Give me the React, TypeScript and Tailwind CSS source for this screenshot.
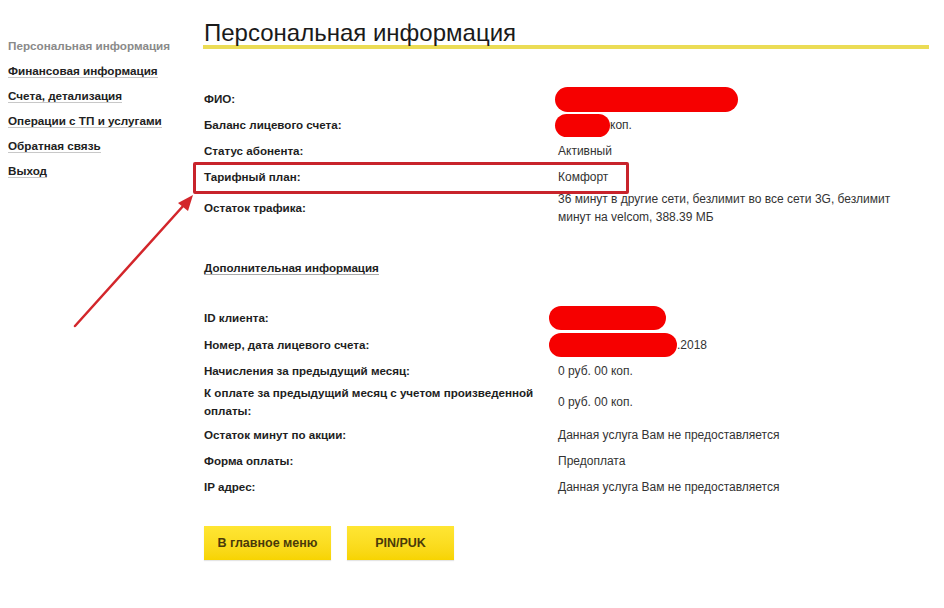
import React from "react";

const font = { fontFamily: '"Liberation Sans", Arial, sans-serif' };

function Blob({ w, h = 24, ml = 0 }: { w: number; h?: number; ml?: number }) {
  return (
    <span
      className="inline-block rounded-full bg-[#f60000] align-middle"
      style={{ width: w, height: h, marginLeft: ml }}
    />
  );
}

function Row({
  label,
  children,
  tall = false,
  className = "",
}: {
  label: React.ReactNode;
  children?: React.ReactNode;
  tall?: boolean;
  className?: string;
}) {
  return (
    <div className={`relative flex items-center ${tall ? "min-h-[36px]" : "min-h-[26px]"} ${className}`}>
      <div className="w-[354px] shrink-0 pr-2 text-[11.6px] font-bold leading-[18px] text-[#1e1e1e]">{label}</div>
      <div className="flex items-center text-[12px] leading-[18px] text-[#333]">{children}</div>
    </div>
  );
}

export default function App() {
  const menu = [
    "Финансовая информация",
    "Счета, детализация",
    "Операции с ТП и услугами",
    "Обратная связь",
    "Выход",
  ];

  return (
    <div className="relative flex h-[608px] w-[944px] overflow-hidden bg-white" style={font}>
      {/* Sidebar */}
      <div className="w-[204px] shrink-0 pl-2 pt-[37px]">
        <ul className="flex flex-col text-[11.7px] font-bold leading-[18px]">
          <li className="h-[25px] text-[#8a8a8a]">Персональная информация</li>
          {menu.map((m) => (
            <li key={m} className="h-[25px]">
              <a className="border-b border-[#c8c8c8] text-[#222]">{m}</a>
            </li>
          ))}
        </ul>
      </div>

      {/* Content */}
      <div className="w-[725px] pt-[21px]">
        <h1 className="-ml-[1px] border-b-4 border-[#ebdc55] pl-[1px] text-[24px] leading-[24px] text-[#1a1a1a]">
          Персональная информация
        </h1>

        <div className="mt-[37px]">
          <Row label="ФИО:">
            <Blob w={183} h={25} ml={-3} />
          </Row>
          <Row label="Баланс лицевого счета:">
            <Blob w={55} h={23} ml={-3} />
            <span>коп.</span>
          </Row>
          <Row label="Статус абонента:">Активный</Row>
          <Row label="Тарифный план:">
            Комфорт
            <div className="pointer-events-none absolute -left-[11px] -top-[2px] h-[32px] w-[436px] rounded-[2px] border-[3px] border-[#c8232b]" />
          </Row>
          <Row label="Остаток трафика:" tall>
            <span className="w-[350px]">36 минут в другие сети, безлимит во все сети 3G, безлимит минут на velcom, 388.39 МБ</span>
          </Row>
        </div>

        <div className="mt-[29px]">
          <span className="border-b border-[#aaa] text-[11.6px] font-bold leading-[18px] text-[#1e1e1e]">
            Дополнительная информация
          </span>
        </div>

        <div className="mt-[26px]">
          <Row label="ID клиента:">
            <Blob w={117} h={24} ml={-9} />
          </Row>
          <Row label="Номер, дата лицевого счета:" className="mt-[1px]">
            <Blob w={128} h={24} ml={-9} />
            <span>.2018</span>
          </Row>
          <Row label="Начисления за предыдущий месяц:">0 руб. 00 коп.</Row>
          <Row label="К оплате за предыдущий месяц с учетом произведенной оплаты:" tall>
            0 руб. 00 коп.
          </Row>
          <Row label="Остаток минут по акции:" className="mt-[2px]">Данная услуга Вам не предоставляется</Row>
          <Row label="Форма оплаты:">Предоплата</Row>
          <Row label="IP адрес:">Данная услуга Вам не предоставляется</Row>
        </div>

        <div className="mt-[26px] flex gap-4">
          <button className="h-[34px] w-[127px] bg-gradient-to-b from-[#ffe633] to-[#f7d400] text-[12.5px] font-bold text-[#4a3a0a] shadow-[0_1px_1px_rgba(0,0,0,0.1)]">
            В главное меню
          </button>
          <button className="h-[34px] w-[107px] bg-gradient-to-b from-[#ffe633] to-[#f7d400] text-[12.5px] font-bold text-[#4a3a0a] shadow-[0_1px_1px_rgba(0,0,0,0.1)]">
            PIN/PUK
          </button>
        </div>
      </div>

      {/* Annotation arrow */}
      <svg className="pointer-events-none absolute left-0 top-0" width="944" height="608">
        <line x1="75" y1="326" x2="184" y2="205" stroke="#d3262b" strokeWidth="2.5" strokeLinecap="round" />
        <polygon points="193,195 178,203 188,211" fill="#d3262b" />
      </svg>
    </div>
  );
}
